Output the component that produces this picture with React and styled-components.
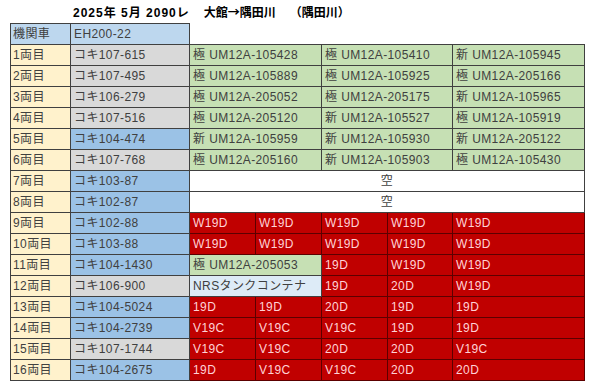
import React from "react";
import styled, { createGlobalStyle } from "styled-components";

const GlobalStyle = createGlobalStyle`
  html, body {
    margin: 0;
    padding: 0;
    background: #ffffff;
  }
  body {
    font-family: "Liberation Sans", "Noto Sans CJK JP", sans-serif;
  }
`;

const palette = {
  label: { bg: "#fff2cc", fg: "#404040", line: "#404040" },
  head: { bg: "#bdd7ee", fg: "#404040", line: "#404040" },
  gray: { bg: "#d9d9d9", fg: "#404040", line: "#404040" },
  blue: { bg: "#9bc2e6", fg: "#404040", line: "#404040" },
  green: { bg: "#c6e0b4", fg: "#404040", line: "#404040" },
  pale: { bg: "#ddebf7", fg: "#404040", line: "#404040" },
  empty: { bg: "#ffffff", fg: "#404040", line: "#404040" },
  red: { bg: "#c00000", fg: "#ffd2d6", line: "#5c0000" },
};

const g = (t) => ({ t, span: 2, kind: "green" });
const g1 = (t) => ({ t, span: 1, kind: "green" });
const r = (t) => ({ t, span: 1, kind: "red" });
const vacant = { t: "空", span: 5, kind: "empty", center: true };

const rows = [
  ["1両目", "コキ107-615", "gray", [g("極 UM12A-105428"), g("極 UM12A-105410"), g1("新 UM12A-105945")]],
  ["2両目", "コキ107-495", "gray", [g("極 UM12A-105889"), g("極 UM12A-105925"), g1("極 UM12A-205166")]],
  ["3両目", "コキ106-279", "gray", [g("極 UM12A-205052"), g("極 UM12A-205175"), g1("新 UM12A-105965")]],
  ["4両目", "コキ107-516", "gray", [g("極 UM12A-205120"), g("新 UM12A-105527"), g1("極 UM12A-105919")]],
  ["5両目", "コキ104-474", "blue", [g("新 UM12A-105959"), g("新 UM12A-105930"), g1("新 UM12A-205122")]],
  ["6両目", "コキ107-768", "gray", [g("極 UM12A-205160"), g("新 UM12A-105903"), g1("極 UM12A-105430")]],
  ["7両目", "コキ103-87", "blue", [vacant]],
  ["8両目", "コキ102-87", "blue", [vacant]],
  ["9両目", "コキ102-88", "blue", [r("W19D"), r("W19D"), r("W19D"), r("W19D"), r("W19D")]],
  ["10両目", "コキ103-88", "blue", [r("W19D"), r("W19D"), r("W19D"), r("W19D"), r("W19D")]],
  ["11両目", "コキ104-1430", "blue", [g("極 UM12A-205053"), r("19D"), r("W19D"), r("W19D")]],
  ["12両目", "コキ106-900", "gray", [{ t: "NRSタンクコンテナ", span: 2, kind: "pale" }, r("19D"), r("20D"), r("W19D")]],
  ["13両目", "コキ104-5024", "blue", [r("19D"), r("19D"), r("20D"), r("19D"), r("19D")]],
  ["14両目", "コキ104-2739", "blue", [r("V19C"), r("V19C"), r("V19C"), r("19D"), r("19D")]],
  ["15両目", "コキ107-1744", "gray", [r("V19C"), r("V19C"), r("20D"), r("20D"), r("V19C")]],
  ["16両目", "コキ104-2675", "blue", [r("19D"), r("V19C"), r("V19C"), r("20D"), r("20D")]],
];

const colWidths = [61, 119, 66, 66, 66, 65, 132];

const App = () => {
  return (
    <Page>
      <GlobalStyle />
      <Title>
        <TitlePart $spacing={1}>2025年 5月 2090レ</TitlePart>
        <TitlePart>
          大館<Arrow>→</Arrow>隅田川
        </TitlePart>
        <TitlePart>（隅田川）</TitlePart>
      </Title>
      <Sheet>
        <colgroup>
          {colWidths.map((w, i) => (
            <col key={i} style={{ width: w }} />
          ))}
        </colgroup>
        <tbody>
          <tr>
            <Cell $kind="head" $first $top>
              機関車
            </Cell>
            <Cell $kind="head" $top>
              EH200-22
            </Cell>
            <Blank colSpan={5} />
          </tr>
          {rows.map(([no, car, carKind, cells]) => (
            <tr key={no}>
              <Cell $kind="label" $first>
                {no}
              </Cell>
              <Cell $kind={carKind}>{car}</Cell>
              {cells.map((c, i) => (
                <Cell key={i} colSpan={c.span} $kind={c.kind} $center={c.center}>
                  {c.t}
                </Cell>
              ))}
            </tr>
          ))}
        </tbody>
      </Sheet>
    </Page>
  );
};

export default App;

const Page = styled.div`
  width: 600px;
  height: 392px;
  overflow: hidden;
  background: #ffffff;
`;

const Title = styled.div`
  height: 23px;
  display: flex;
  align-items: center;
  gap: 14px;
  padding-left: 73px;
  font-size: 12px;
  font-weight: 700;
  color: #000000;
  white-space: pre;
`;

const TitlePart = styled.span`
  letter-spacing: ${(p) => p.$spacing || 0}px;
`;

const Arrow = styled.span`
  font-family: "Noto Sans CJK JP", sans-serif;
`;

const Sheet = styled.table`
  margin-left: 10px;
  width: 575px;
  table-layout: fixed;
  border-collapse: separate;
  border-spacing: 0;
  font-size: 12px;
  letter-spacing: 0.4px;
`;

const Cell = styled.td`
  box-sizing: border-box;
  height: 21px;
  padding: 1px 0 0 ${(p) => (p.$center ? 0 : p.$first ? 2 : 3)}px;
  line-height: 19px;
  white-space: nowrap;
  overflow: hidden;
  text-align: ${(p) => (p.$center ? "center" : "left")};
  background: ${(p) => palette[p.$kind].bg};
  color: ${(p) => palette[p.$kind].fg};
  border-right: 1px solid ${(p) => palette[p.$kind].line};
  border-bottom: 1px solid ${(p) => palette[p.$kind].line};
  border-left: ${(p) => (p.$first ? "1px solid #404040" : "none")};
  border-top: ${(p) => (p.$top ? "1px solid #404040" : "none")};
`;

const Blank = styled.td`
  height: 21px;
  padding: 0;
  border-bottom: 1px solid #404040;
`;
